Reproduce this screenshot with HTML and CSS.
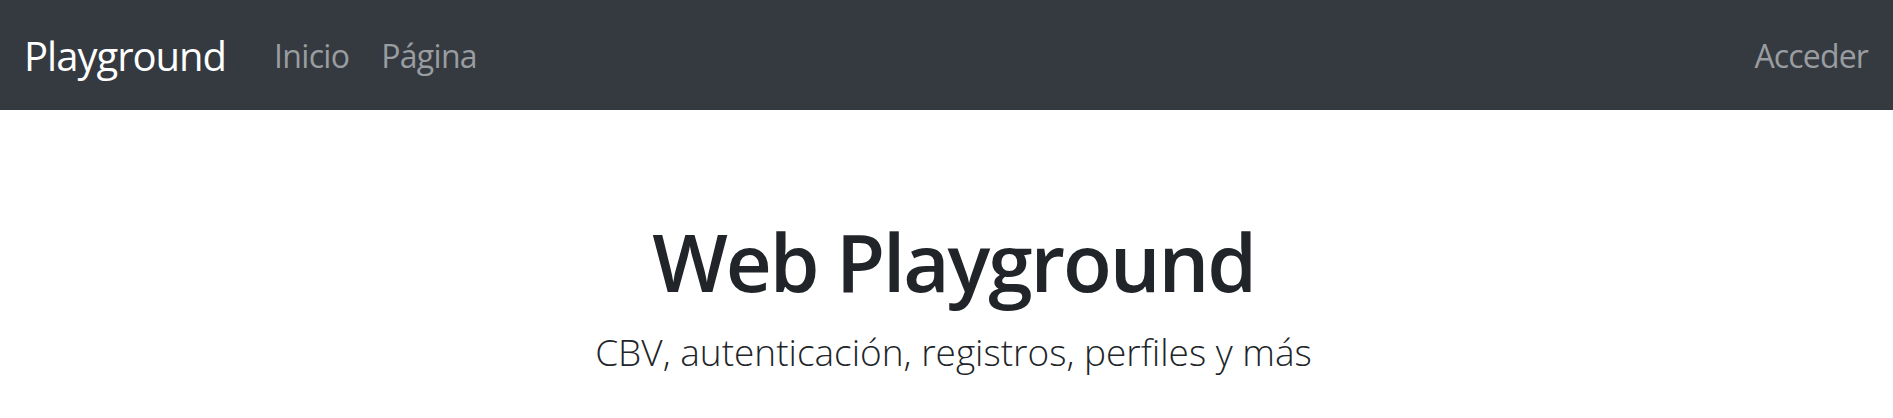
FILE: index.html
```html
<!DOCTYPE html>
<html lang="es">
<head>
<meta charset="utf-8">
<title>Web Playground</title>
<link rel="stylesheet" href="styles.css">
</head>
<body>
<nav class="navbar">
  <a class="brand" href="#">Playground</a>
  <ul class="nav">
    <li><a class="nav-link" href="#">Inicio</a></li>
    <li><a class="nav-link" href="#">Página</a></li>
  </ul>
  <ul class="nav nav-right">
    <li><a class="nav-link" href="#">Acceder</a></li>
  </ul>
</nav>
<main class="hero">
  <h1 class="title">Web Playground</h1>
  <p class="lead">CBV, autenticación, registros, perfiles y más</p>
</main>
</body>
</html>
```
FILE: styles.css
```css
html, body {
  margin: 0;
  padding: 0;
}
body {
  font-family: "Open Sans", "Noto Sans", sans-serif;
  color: #212529;
  background: #fff;
}
a {
  text-decoration: none;
}
.navbar {
  display: flex;
  align-items: center;
  height: 110px;
  padding: 2px 25px 0 24px;
  background: #343a40;
  box-sizing: border-box;
}
.brand {
  font-size: 40px;
  line-height: 1.5;
  letter-spacing: -1px;
  color: #fff;
  margin-right: 32px;
}
.nav {
  display: flex;
  list-style: none;
  margin: 0;
  padding: 0;
}
.nav-right {
  margin-left: auto;
}
.nav-link {
  display: block;
  font-size: 32px;
  line-height: 1.5;
  letter-spacing: -0.7px;
  padding: 0 16px;
  color: #9a9da0;
}
.nav-right .nav-link {
  padding-right: 0;
  letter-spacing: -0.85px;
}
.hero {
  text-align: center;
  padding-left: 14px;
}
.title {
  margin: 103px 0 0;
  font-size: 80px;
  font-weight: 600;
  line-height: 1.2;
  letter-spacing: -2.1px;
}
.lead {
  margin: 15px 0 0;
  font-size: 37px;
  font-weight: 300;
  line-height: 1.5;
}
```
